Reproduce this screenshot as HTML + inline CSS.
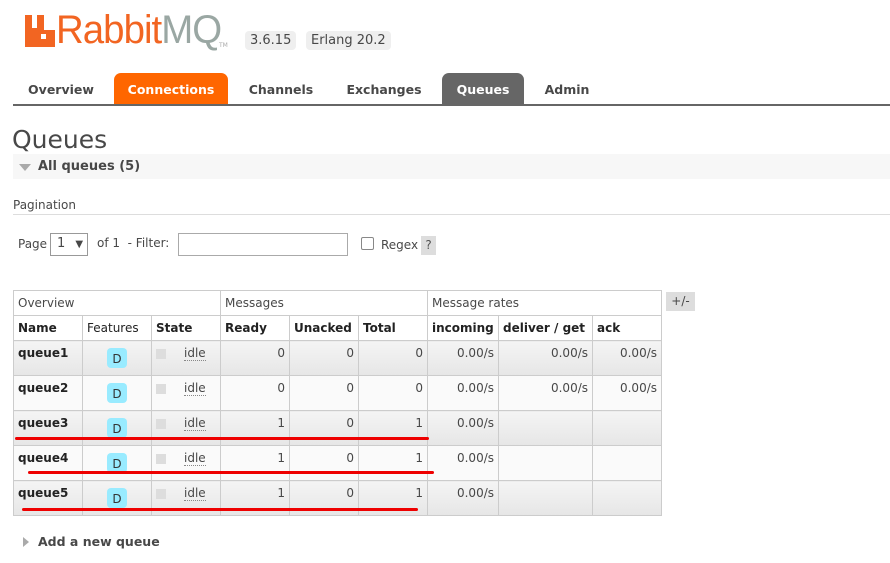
<!DOCTYPE html><html><head><style>
body{margin:0;width:890px;height:563px;background:#fff;font-family:"DejaVu Sans","Liberation Sans",sans-serif;color:#484848;position:relative;overflow:hidden;font-size:12px}
.a{position:absolute;white-space:nowrap}
.tab{position:absolute;top:73px;height:32px;line-height:32px;font-weight:bold;font-size:12.5px;text-align:center;color:#484848;border-radius:7px 7px 0 0}
table{position:absolute;left:13px;top:290px;border-collapse:collapse;table-layout:fixed}
td{border:1px solid #ccc;padding:0 4px;font-size:12px;height:24px;vertical-align:middle}
tr.r td{height:29px;background:linear-gradient(#f4f4f4,#e6e6e6);vertical-align:top;padding-top:5px}
tr.r.w td{background:#fafafa}
.n{text-align:right}
.D{display:inline-block;width:20px;height:20px;margin-top:2px;background:#99ebff;border-radius:4px;text-align:center;line-height:22px;font-size:12px;color:#333}
.sq{display:inline-block;width:10px;height:10px;background:#ddd;margin-right:18px;vertical-align:middle}
.idle{border-bottom:1px dotted #888}
.red{position:absolute;height:3px;background:#e00;border-radius:2px}
</style></head><body>
<svg class="a" style="left:25px;top:15px" width="30" height="32"><path d="M0 0h7v13h5V0h7v15l0 0h11v17H0z" fill="#f26522"/><rect x="16" y="19" width="5" height="5" fill="#fff"/></svg>
<div class="a" style="left:56px;top:8px;font-size:40px;color:#f26522;font-family:'Liberation Sans',sans-serif;letter-spacing:-1px;transform:scaleX(0.96);transform-origin:left">Rabbit<span style="color:#9aa7a3">MQ</span></div>
<div class="a" style="left:219px;top:42px;font-size:6px;color:#aaa">TM</div>
<div class="a" style="left:245px;top:31px;background:#efefef;border-radius:4px;padding:2px 5px;font-size:13px">3.6.15</div>
<div class="a" style="left:306px;top:31px;background:#efefef;border-radius:4px;padding:2px 5px;font-size:13px">Erlang 20.2</div>
<div class="tab" style="left:14px;width:94px;top:74px">Overview</div>
<div class="tab" style="left:114px;width:114px;background:#f60;color:#fff;line-height:33px">Connections</div>
<div class="tab" style="left:234px;width:94px;top:74px">Channels</div>
<div class="tab" style="left:334px;width:100px;top:74px">Exchanges</div>
<div class="tab" style="left:442px;width:82px;background:#666;color:#fff;line-height:33px">Queues</div>
<div class="tab" style="left:530px;width:74px;top:74px">Admin</div>
<div class="a" style="left:13px;top:104px;width:877px;height:2px;background:#666"></div>
<div class="a" style="left:12px;top:125px;font-size:25px;color:#484848">Queues</div>
<div class="a" style="left:13px;top:154px;width:877px;height:25px;background:#f7f7f7"></div>
<div class="a" style="left:19px;top:164px;width:0;height:0;border-left:6px solid transparent;border-right:6px solid transparent;border-top:7px solid #aaa"></div>
<div class="a" style="left:38px;top:159px;font-weight:bold;font-size:13px">All queues (5)</div>
<div class="a" style="left:13px;top:198px;font-size:12px">Pagination</div>
<div class="a" style="left:13px;top:214px;width:877px;height:1px;background:#ddd"></div>
<div class="a" style="left:18px;top:237px">Page</div>
<div class="a" style="left:50px;top:233px;width:38px;height:23px;border:1px solid #999;box-sizing:border-box;padding:2px 6px;font-size:13px">1 <span style="font-size:10px;margin-left:6px">▼</span></div>
<div class="a" style="left:97px;top:236px">of 1 &nbsp;- Filter:</div>
<div class="a" style="left:178px;top:233px;width:170px;height:23px;border:1px solid #aaa;box-sizing:border-box"></div>
<div class="a" style="left:361px;top:237px;width:11px;height:11px;border:1px solid #888;border-radius:2px"></div>
<div class="a" style="left:381px;top:238px">Regex</div>
<div class="a" style="left:421px;top:236px;width:15px;height:19px;background:#ddd;text-align:center;line-height:19px;color:#555">?</div>
<table>
<colgroup><col width="69"><col width="69"><col width="69"><col width="69"><col width="69"><col width="69"><col width="71"><col width="94"><col width="69"></colgroup>
<tr><td colspan="3">Overview</td><td colspan="3">Messages</td><td colspan="3">Message rates</td></tr>
<tr style="font-weight:bold;color:#222"><td>Name</td><td style="font-weight:normal">Features</td><td>State</td><td>Ready</td><td>Unacked</td><td>Total</td><td>incoming</td><td>deliver / get</td><td>ack</td></tr>
<tr class="r"><td><b style="color:#222">queue1</b></td><td style="text-align:center"><span class="D">D</span></td><td><span class="sq"></span><span class="idle">idle</span></td><td class="n">0</td><td class="n">0</td><td class="n">0</td><td class="n">0.00/s</td><td class="n">0.00/s</td><td class="n">0.00/s</td></tr>
<tr class="r w"><td><b style="color:#222">queue2</b></td><td style="text-align:center"><span class="D">D</span></td><td><span class="sq"></span><span class="idle">idle</span></td><td class="n">0</td><td class="n">0</td><td class="n">0</td><td class="n">0.00/s</td><td class="n">0.00/s</td><td class="n">0.00/s</td></tr>
<tr class="r"><td><b style="color:#222">queue3</b></td><td style="text-align:center"><span class="D">D</span></td><td><span class="sq"></span><span class="idle">idle</span></td><td class="n">1</td><td class="n">0</td><td class="n">1</td><td class="n">0.00/s</td><td></td><td></td></tr>
<tr class="r w"><td><b style="color:#222">queue4</b></td><td style="text-align:center"><span class="D">D</span></td><td><span class="sq"></span><span class="idle">idle</span></td><td class="n">1</td><td class="n">0</td><td class="n">1</td><td class="n">0.00/s</td><td></td><td></td></tr>
<tr class="r"><td><b style="color:#222">queue5</b></td><td style="text-align:center"><span class="D">D</span></td><td><span class="sq"></span><span class="idle">idle</span></td><td class="n">1</td><td class="n">0</td><td class="n">1</td><td class="n">0.00/s</td><td></td><td></td></tr>
</table>
<div class="a" style="left:666px;top:292px;width:29px;height:19px;background:#ddd;text-align:center;line-height:19px">+/-</div>
<div class="red" style="left:15px;top:437px;width:414px"></div>
<div class="red" style="left:28px;top:471px;width:406px"></div>
<div class="red" style="left:22px;top:508px;width:396px"></div>
<div class="a" style="left:23px;top:537px;width:0;height:0;border-top:5px solid transparent;border-bottom:5px solid transparent;border-left:6px solid #aaa"></div>
<div class="a" style="left:38px;top:534px;font-weight:bold;font-size:12.5px">Add a new queue</div>
</body></html>
